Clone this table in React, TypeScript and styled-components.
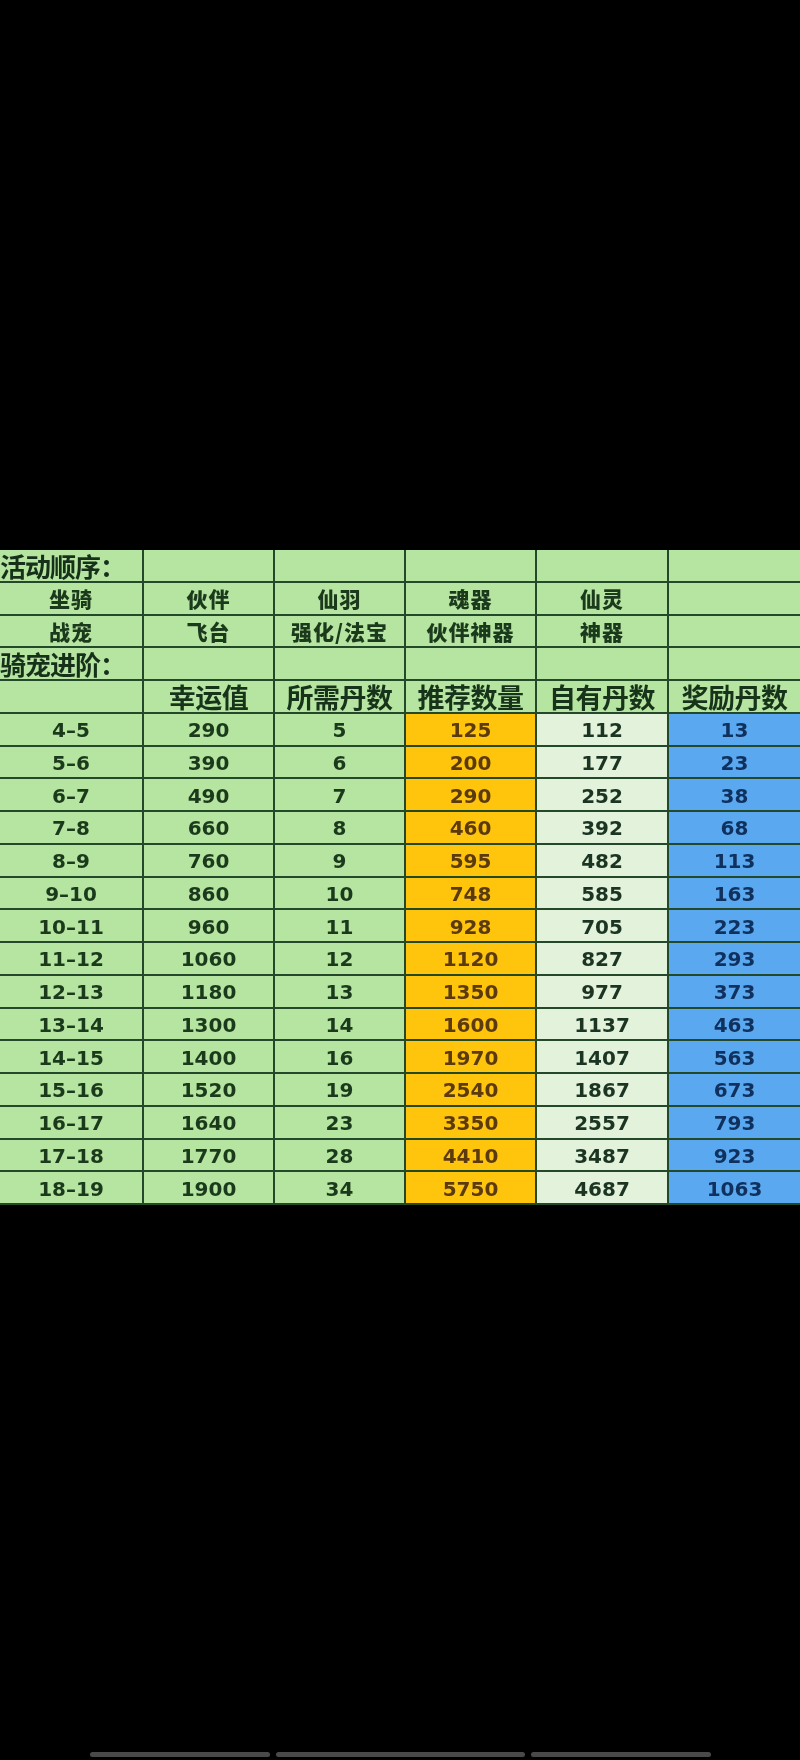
import React from 'react'
import styled, { createGlobalStyle } from 'styled-components'

const colors = {
  page: '#000000',
  line: '#24492a',
  green: '#b6e5a1',
  pale: '#e3f2da',
  orange: '#ffc40c',
  blue: '#5aa9f0',
  textGreen: '#1b3a1c',
  textOrange: '#5b3a0e',
  textBlue: '#10305e',
  textPale: '#1c3523',
  bar: '#4a4a4a',
}

type Tone = 'green' | 'pale' | 'orange' | 'blue'

const toneBg: Record<Tone, string> = {
  green: colors.green,
  pale: colors.pale,
  orange: colors.orange,
  blue: colors.blue,
}

const toneText: Record<Tone, string> = {
  green: colors.textGreen,
  pale: colors.textPale,
  orange: colors.textOrange,
  blue: colors.textBlue,
}

const GlobalStyle = createGlobalStyle`
  html, body {
    margin: 0;
    padding: 0;
    background: ${colors.page};
  }
  * { box-sizing: border-box; }
`

const rows: [string, number, number, number, number, number][] = [
  ['4–5', 290, 5, 125, 112, 13],
  ['5–6', 390, 6, 200, 177, 23],
  ['6–7', 490, 7, 290, 252, 38],
  ['7–8', 660, 8, 460, 392, 68],
  ['8–9', 760, 9, 595, 482, 113],
  ['9–10', 860, 10, 748, 585, 163],
  ['10–11', 960, 11, 928, 705, 223],
  ['11–12', 1060, 12, 1120, 827, 293],
  ['12–13', 1180, 13, 1350, 977, 373],
  ['13–14', 1300, 14, 1600, 1137, 463],
  ['14–15', 1400, 16, 1970, 1407, 563],
  ['15–16', 1520, 19, 2540, 1867, 673],
  ['16–17', 1640, 23, 3350, 2557, 793],
  ['17–18', 1770, 28, 4410, 3487, 923],
  ['18–19', 1900, 34, 5750, 4687, 1063],
]

const topRows: string[][] = [
  ['坐骑', '伙伴', '仙羽', '魂器', '仙灵', ''],
  ['战宠', '飞台', '强化/法宝', '伙伴神器', '神器', ''],
]

const headers = ['', '幸运值', '所需丹数', '推荐数量', '自有丹数', '奖励丹数']
const dataTones: Tone[] = ['green', 'green', 'green', 'orange', 'pale', 'blue']

const App: React.FunctionComponent = () => {
  return (
    <Page>
      <GlobalStyle />
      <Sheet>
        <Grid>
          <TitleCell>活动顺序：</TitleCell>
          {[1, 2, 3, 4, 5].map(i => <Cell key={'a' + i} tone="green" />)}

          {topRows.map((r, ri) =>
            r.map((t, ci) => (
              <LabelCell key={'t' + ri + ci}>{t}</LabelCell>
            ))
          )}

          <TitleCell>骑宠进阶：</TitleCell>
          {[1, 2, 3, 4, 5].map(i => <Cell key={'b' + i} tone="green" />)}

          {headers.map((h, i) => (
            <HeadCell key={'h' + i}>{h}</HeadCell>
          ))}

          {rows.map((r, ri) =>
            r.map((v, ci) => (
              <Cell key={'d' + ri + ci} tone={dataTones[ci]}>
                {v}
              </Cell>
            ))
          )}
        </Grid>
      </Sheet>
      <Indicator>
        <Bar w={180} />
        <Bar w={249} />
        <Bar w={180} />
      </Indicator>
    </Page>
  )
}

export default App

const Page = styled.div`
  width: 800px;
  height: 1760px;
  background: ${colors.page};
  display: flex;
  flex-direction: column;
  overflow: hidden;
`

const Sheet = styled.div`
  margin-top: 550px;
  width: 800px;
  background: ${colors.line};
  padding-bottom: 2px;
  filter: blur(0.35px);
`

const Grid = styled.div`
  display: grid;
  grid-template-columns: 142px 129px 129px 129px 130px 1fr;
  grid-auto-rows: 30.75px;
  gap: 2px;
`

const Cell = styled.div<{ tone: Tone }>`
  background: ${p => toneBg[p.tone]};
  color: ${p => toneText[p.tone]};
  display: flex;
  align-items: center;
  justify-content: center;
  font-family: 'DejaVu Sans', 'Noto Sans CJK SC', sans-serif;
  font-weight: bold;
  font-size: 20px;
  padding-top: 2px;
`

const TitleCell = styled.div`
  background: ${colors.green};
  color: #16301a;
  display: flex;
  align-items: center;
  font-family: 'Noto Sans CJK SC', sans-serif;
  font-weight: bold;
  font-size: 26px;
  white-space: nowrap;
  letter-spacing: -1px;
`

const LabelCell = styled.div`
  background: ${colors.green};
  color: ${colors.textGreen};
  display: flex;
  align-items: center;
  justify-content: center;
  font-family: 'Noto Sans CJK SC', sans-serif;
  font-weight: 900;
  font-size: 21px;
  letter-spacing: 1px;
  white-space: nowrap;
`

const HeadCell = styled.div`
  background: ${colors.green};
  color: #17331a;
  display: flex;
  align-items: center;
  justify-content: center;
  font-family: 'Noto Sans CJK SC', sans-serif;
  font-weight: bold;
  font-size: 27px;
  letter-spacing: -0.5px;
  white-space: nowrap;
`

const Indicator = styled.div`
  margin-top: auto;
  margin-bottom: 3px;
  display: flex;
  justify-content: center;
  gap: 6px;
`

const Bar = styled.div<{ w: number }>`
  width: ${p => p.w}px;
  height: 5px;
  border-radius: 3px;
  background: ${colors.bar};
`
